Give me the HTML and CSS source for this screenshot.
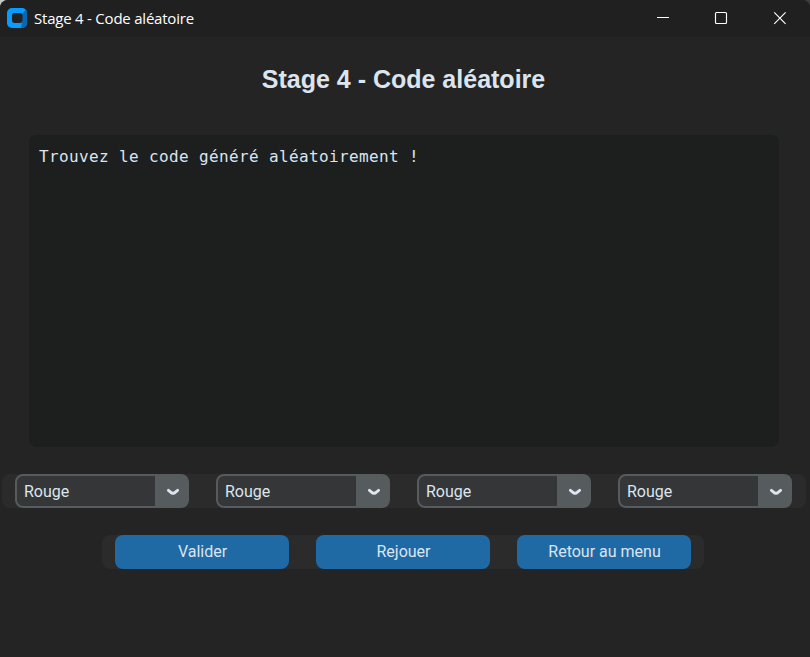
FILE: index.html
```html
<!DOCTYPE html>
<html lang="fr">
<head>
<meta charset="utf-8">
<title>Stage 4 - Code aléatoire</title>
<link rel="stylesheet" href="styles.css">
</head>
<body>
<div class="window">
  <header class="titlebar">
    <svg class="app-icon" width="20" height="20" viewBox="0 0 20 20"><rect width="20" height="20" rx="5" fill="#0a9bff"/><path d="M19 1.6a5 5 0 0 1 1 3.4v10a5 5 0 0 1-5 5h-1l1-6V6z" fill="#0867b5"/><rect x="5" y="5" width="10.5" height="10" rx="2.4" fill="#212122"/></svg>
    <span class="caption">Stage 4 - Code aléatoire</span>
    <div class="controls">
      <svg width="58" height="36" viewBox="0 0 58 36"><path d="M22 17.5h12" stroke="#fff"/></svg>
      <svg width="58" height="36" viewBox="0 0 58 36"><rect x="22.5" y="12.5" width="11" height="11" rx="1" fill="none" stroke="#fff" stroke-width="1.15"/></svg>
      <svg width="62" height="36" viewBox="0 0 62 36"><path d="M23.2 12.4l11.4 11.4M34.6 12.4L23.2 23.8" stroke="#fff" stroke-width="1.15"/></svg>
    </div>
  </header>
  <main>
    <h1>Stage 4 - Code aléatoire</h1>
    <div class="output">Trouvez le code généré aléatoirement !</div>
    <div class="row selects">
      <div class="select"><span>Rouge</span><i><svg width="14" height="8" viewBox="0 0 14 8"><path d="M2.4 2.4L5.6 4.9Q7 5.6 8.4 4.9L11.6 2.4"/></svg></i></div>
      <div class="select"><span>Rouge</span><i><svg width="14" height="8" viewBox="0 0 14 8"><path d="M2.4 2.4L5.6 4.9Q7 5.6 8.4 4.9L11.6 2.4"/></svg></i></div>
      <div class="select"><span>Rouge</span><i><svg width="14" height="8" viewBox="0 0 14 8"><path d="M2.4 2.4L5.6 4.9Q7 5.6 8.4 4.9L11.6 2.4"/></svg></i></div>
      <div class="select"><span>Rouge</span><i><svg width="14" height="8" viewBox="0 0 14 8"><path d="M2.4 2.4L5.6 4.9Q7 5.6 8.4 4.9L11.6 2.4"/></svg></i></div>
    </div>
    <div class="row buttons">
      <button>Valider</button>
      <button>Rejouer</button>
      <button>Retour au menu</button>
    </div>
  </main>
</div>
</body>
</html>
```
FILE: styles.css
```css
* { box-sizing: border-box; }
body { margin: 0; background: linear-gradient(90deg, #c8c8c8 50%, #3c3c3c 50%); }
.window { height: 657px; border-radius: 8px 8px 0 0; background: #242424; overflow: hidden; }
.titlebar {
  display: flex;
  align-items: center;
  height: 37px;
  padding-left: 7px;
  background: #212021;
  color: #fff;
}
.app-icon { display: block; margin-top: -1px; }
.caption {
  margin: -2px 0 0 7px;
  font: 15px/20px "Open Sans", "Noto Sans", sans-serif;
  letter-spacing: -0.22px;
  white-space: nowrap;
}
.controls { display: flex; margin: -1px -3px 0 auto; }
.controls svg { display: block; }
main { display: flex; flex-direction: column; }
h1 {
  margin: 26px 0 0;
  padding-right: 3px;
  height: 32px;
  text-align: center;
  color: #dce4ee;
  font: bold 25px/32px "Liberation Sans", Arial, sans-serif;
}
.output {
  margin: 40px 31px 0 29px;
  height: 312px;
  padding: 11px 10px;
  border-radius: 8px;
  background: #1d1e1e;
  color: #dce4ee;
  font: 16px/22px "DejaVu Sans Mono", monospace;
  letter-spacing: 0.367px;
  white-space: pre;
}
.row {
  display: flex;
  gap: 27px;
  height: 34px;
  padding: 0 13px;
  border-radius: 8px;
  background: #2b2b2b;
}
.selects { width: 804px; margin: 27px 0 0 2px; }
.buttons { width: 602px; margin: 27px 0 0 102px; }
.select {
  display: flex;
  width: 174px;
  height: 34px;
  border: 2px solid #565b5e;
  border-radius: 8px;
  background: #343638;
  color: #dce4ee;
  font: 16px/32px Roboto, sans-serif;
}
.select span { flex: 1; padding-left: 7px; }
.select i {
  display: flex;
  align-items: center;
  justify-content: center;
  width: 32px;
  height: 30px;
  padding-top: 2px;
  padding-left: 4px;
  background: #565b5e;
}
.select path {
  fill: none;
  stroke: #dce4ee;
  stroke-width: 2.9;
  stroke-linecap: round;
}
button {
  width: 174px;
  height: 34px;
  padding: 0 0 0 1px;
  border: 0;
  border-radius: 8px;
  background: #1f6aa5;
  color: #dce4ee;
  font: 16px/34px Roboto, sans-serif;
}
```
